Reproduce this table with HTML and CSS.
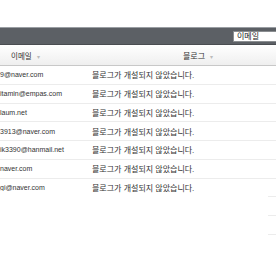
FILE: index.html
```html
<!DOCTYPE html>
<html lang="ko">
<head>
<meta charset="utf-8">
<link rel="stylesheet" href="styles.css">
</head>
<body>
<div class="page">
  <div class="toolbar">
    <div class="search">이메일</div>
  </div>
  <div class="grid">
    <div class="table">
      <div class="head">
        <div class="col-email hcell">이메일 <span class="arrow">▾</span></div>
        <div class="col-blog hcell blog-head">블로그 <span class="arrow">▾</span></div>
      </div>
      <div class="row"><div class="col-email">9@naver.com</div><div class="col-blog">블로그가 개설되지 않았습니다.</div></div>
      <div class="row"><div class="col-email">itamin@empas.com</div><div class="col-blog">블로그가 개설되지 않았습니다.</div></div>
      <div class="row"><div class="col-email">laum.net</div><div class="col-blog">블로그가 개설되지 않았습니다.</div></div>
      <div class="row"><div class="col-email">3913@naver.com</div><div class="col-blog">블로그가 개설되지 않았습니다.</div></div>
      <div class="row"><div class="col-email">ik3390@hanmail.net</div><div class="col-blog">블로그가 개설되지 않았습니다.</div></div>
      <div class="row"><div class="col-email">naver.com</div><div class="col-blog">블로그가 개설되지 않았습니다.</div></div>
      <div class="row last"><div class="col-email">gi@naver.com</div><div class="col-blog">블로그가 개설되지 않았습니다.</div></div>
    </div>
    <div class="side">
      <div class="side-head"></div>
      <div class="side-row"></div>
      <div class="side-row"></div>
      <div class="side-row"></div>
      <div class="side-row"></div>
      <div class="side-row"></div>
      <div class="side-row"></div>
      <div class="side-row"></div>
      <div class="side-row"></div>
      <div class="side-row"></div>
    </div>
  </div>
</div>
</body>
</html>
```
FILE: styles.css
```css
html, body {
  margin: 0;
  padding: 0;
  background: #fff;
}
body {
  font-family: "Liberation Sans", "Noto Sans CJK KR", sans-serif;
  font-size: 7px;
  color: #333;
  width: 276px;
  height: 260px;
  overflow: hidden;
}
.page {
  padding-top: 27px;
}
.toolbar {
  height: 18px;
  box-sizing: border-box;
  background: #5c6065;
  border-top: 1px solid #9a9ea3;
  border-bottom: 1px solid #4a4d51;
  display: flex;
  align-items: center;
  padding-left: 233px;
}
.search {
  flex: 1;
  height: 11px;
  box-sizing: border-box;
  background: #fff;
  border: 1px solid #8a8d90;
  border-right: none;
  padding-left: 3px;
  font-size: 8px;
  line-height: 9px;
  color: #222;
}
.grid {
  display: flex;
}
.table {
  flex: 1;
}
.head {
  display: flex;
  height: 21px;
  box-sizing: border-box;
  background: linear-gradient(#ffffff, #efefef);
  border-bottom: 1px solid #c8c8c8;
  align-items: center;
}
.hcell {
  color: #333;
  font-size: 7.5px;
}
.head .col-email {
  padding-left: 11px;
}
.blog-head {
  padding-left: 91px;
}
.arrow {
  color: #bbb;
  font-size: 6px;
  margin-left: 3px;
}
.col-email {
  width: 92px;
  box-sizing: border-box;
  white-space: nowrap;
  overflow: hidden;
}
.col-blog {
  flex: 1;
  white-space: nowrap;
  font-size: 8px;
}
.row {
  display: flex;
  align-items: center;
  height: 18.75px;
  box-sizing: border-box;
  border-bottom: 1px solid #ececec;
}
.row.last {
  border-bottom: none;
}
.side {
  width: 8px;
}
.side-head {
  height: 21px;
  box-sizing: border-box;
  background: linear-gradient(#ffffff, #efefef);
  border-bottom: 1px solid #c8c8c8;
}
.side-row {
  height: 18.75px;
  box-sizing: border-box;
  border-bottom: 1px solid #ececec;
}
```
